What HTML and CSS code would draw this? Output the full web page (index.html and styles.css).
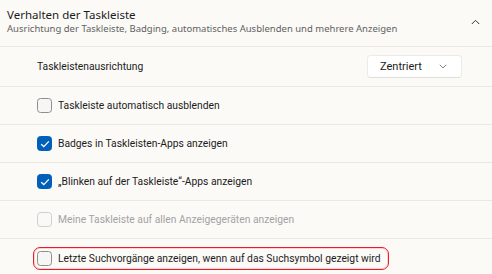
FILE: index.html
```html
<!DOCTYPE html>
<html lang="de">
<head>
<meta charset="utf-8">
<link rel="stylesheet" href="styles.css">
</head>
<body>
<div class="panel">
  <div class="header">
    <div class="titles">
      <div class="title">Verhalten der Taskleiste</div>
      <div class="subtitle">Ausrichtung der Taskleiste, Badging, automatisches Ausblenden und mehrere Anzeigen</div>
    </div>
    <svg class="chev-up" width="9" height="6" viewBox="0 0 9 6"><path d="M0.8 5 L4.5 1.3 L8.2 5" fill="none" stroke="#333" stroke-width="1"/></svg>
  </div>
  <div class="row first">
    <span class="label">Taskleistenausrichtung</span>
    <div class="select">
      <span>Zentriert</span>
      <svg width="8" height="5" viewBox="0 0 8 5"><path d="M0.8 0.8 L4 4 L7.2 0.8" fill="none" stroke="#777" stroke-width="0.9"/></svg>
    </div>
  </div>
  <div class="row">
    <span class="cb"></span>
    <span class="label">Taskleiste automatisch ausblenden</span>
  </div>
  <div class="row">
    <span class="cb on"><svg width="10" height="8" viewBox="0 0 10 8"><path d="M1.2 4.2 L3.8 6.6 L8.8 1.4" fill="none" stroke="#fff" stroke-width="1.3"/></svg></span>
    <span class="label">Badges in Taskleisten-Apps anzeigen</span>
  </div>
  <div class="row">
    <span class="cb on"><svg width="10" height="8" viewBox="0 0 10 8"><path d="M1.2 4.2 L3.8 6.6 L8.8 1.4" fill="none" stroke="#fff" stroke-width="1.3"/></svg></span>
    <span class="label">„Blinken auf der Taskleiste“-Apps anzeigen</span>
  </div>
  <div class="row disabled">
    <span class="cb"></span>
    <span class="label">Meine Taskleiste auf allen Anzeigegeräten anzeigen</span>
  </div>
  <div class="row last">
    <div class="highlight">
      <span class="cb"></span>
      <span class="label">Letzte Suchvorgänge anzeigen, wenn auf das Suchsymbol gezeigt wird</span>
    </div>
  </div>
</div>
</body>
</html>
```
FILE: styles.css
```css
html, body {
  margin: 0;
  padding: 0;
  background: #fbfaf7;
}
body {
  font-family: "Noto Sans", "Open Sans", sans-serif;
  color: #1b1b1b;
  width: 492px;
  height: 274px;
  overflow: hidden;
}
.panel {
  display: flex;
  flex-direction: column;
}
.header {
  display: flex;
  align-items: center;
  justify-content: space-between;
  height: 47px;
  box-sizing: border-box;
  padding: 0 12px 4px 7px;
  border-bottom: 1px solid #ebe8e2;
}
.title {
  font-size: 11.5px;
  line-height: 15px;
}
.subtitle {
  font-size: 9.5px;
  line-height: 13px;
  color: #616161;
}
.chev-up {
  margin-top: 1px;
}
.row {
  display: flex;
  align-items: center;
  gap: 6px;
  height: 38px;
  box-sizing: border-box;
  padding: 0 30px 0 37px;
  border-bottom: 1px solid #ebe8e2;
  font-family: Roboto, "Noto Sans", sans-serif;
  font-size: 10.3px;
}
.row.first {
  height: 40px;
  justify-content: space-between;
}
.row.last {
  border-bottom: none;
  padding-left: 33px;
}
.select {
  display: flex;
  align-items: center;
  justify-content: space-between;
  width: 95px;
  height: 23px;
  box-sizing: border-box;
  padding: 0 14px 0 12px;
  background: #ffffff;
  border: 1px solid #ecebe8;
  border-bottom-color: #e0dfdc;
  border-radius: 4px;
  margin-top: -1px;
  font-size: 11px;
}
.cb {
  width: 15px;
  height: 15px;
  box-sizing: border-box;
  border: 1px solid #8e8e8e;
  border-radius: 3.5px;
  background: #f6f6f4;
  display: flex;
  align-items: center;
  justify-content: center;
  flex: none;
}
.cb.on {
  background: #005fb8;
  border-color: #005fb8;
}
.disabled .label {
  color: #a3a3a3;
}
.disabled .cb {
  border-color: #cfcfcd;
  background: #f9f9f7;
}
.highlight {
  display: flex;
  align-items: center;
  gap: 6px;
  height: 23px;
  box-sizing: border-box;
  padding: 0 7px 0 3px;
  border: 1.25px solid #e81d2a;
  border-radius: 7px;
  box-shadow: inset 0 0 0 1px #fbd3d5;
}
```
